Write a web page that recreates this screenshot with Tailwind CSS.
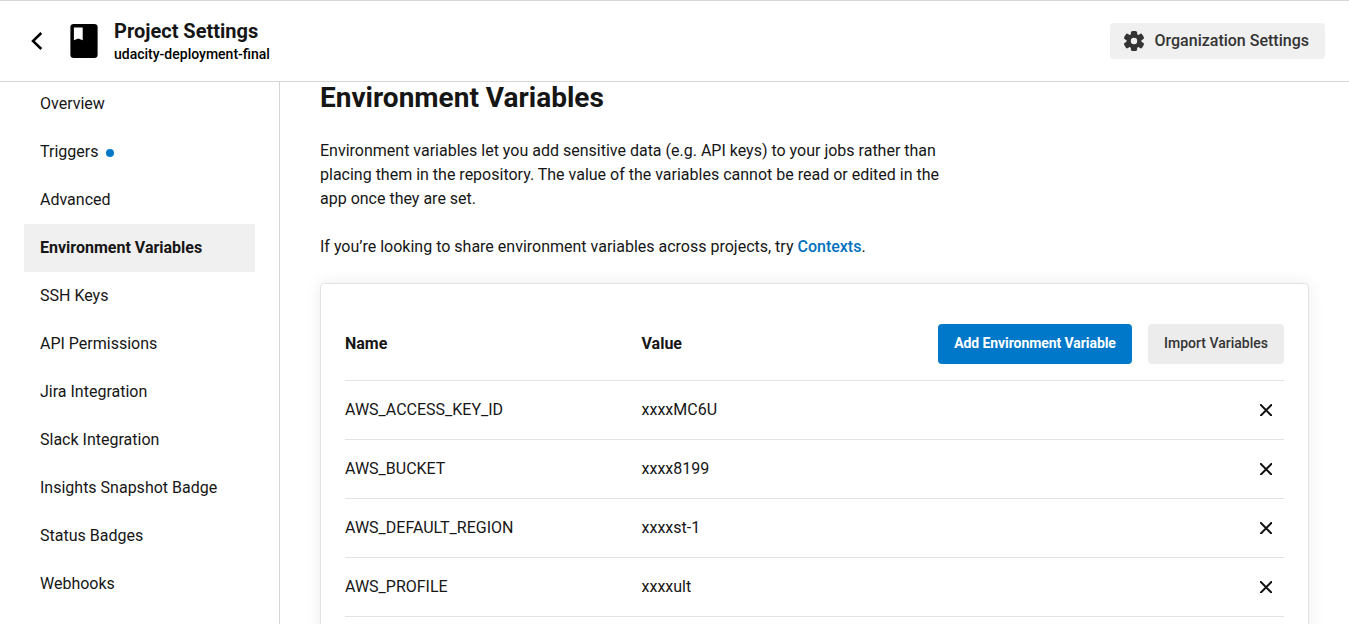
<!DOCTYPE html>
<html lang="en">
<head>
<meta charset="utf-8">
<title>Project Settings</title>
<script src="https://cdn.jsdelivr.net/npm/@tailwindcss/browser@4"></script>
</head>
<body class="flex h-screen flex-col overflow-hidden bg-white font-['Roboto',sans-serif] text-base text-[#161616]">
<header class="flex h-[82px] shrink-0 items-center border-y border-[#d6d6d6] pr-6 pl-[30px]">
  <svg class="h-[34px] w-[14px] shrink-0" viewBox="0 0 14 34" fill="none" stroke="#000" stroke-width="2.5"><path d="M11.3 9 3 17l8.300 8"/></svg>
  <svg class="ml-[26px] h-[34px] w-7 shrink-0" viewBox="0 0 28 34"><rect x=".4" width="27.200" height="34" rx="3.300" fill="#000"/><path d="M3.900 3.600h8.800v12.700l-4.400-1.900-4.400 1.900z" fill="#fff"/></svg>
  <div class="ml-4 flex flex-col pt-0.5">
    <h1 class="text-xl leading-6 font-bold">Project Settings</h1>
    <p class="text-sm leading-[22px] font-medium text-black">udacity-deployment-final</p>
  </div>
  <button class="ml-auto flex h-9 w-[215px] items-center rounded bg-[#f0f0f0] pl-3 text-[#343434]">
    <svg class="size-6" viewBox="0 0 24 24"><g fill="#343434"><rect x="8.900" y="2" width="6.200" height="20" rx="1.600"/><rect x="8.900" y="1.600" width="6.200" height="20.800" rx="1.600" transform="rotate(60 12 12)"/><rect x="8.900" y="1.600" width="6.200" height="20.800" rx="1.600" transform="rotate(120 12 12)"/><circle cx="12" cy="12" r="7.500"/></g><circle cx="12" cy="12" r="3.200" fill="#f0f0f0"/></svg>
    <span class="ml-[8.500px] font-medium whitespace-nowrap">Organization Settings</span>
  </button>
</header>
<div class="flex min-h-0 flex-1 overflow-hidden">
  <nav class="w-[280px] shrink-0 border-r border-[#d6d6d6] pr-6 pl-6">
    <ul class="-mt-0.5 leading-[48px]">
      <li class="h-12 px-4">Overview</li>
      <li class="flex h-12 items-center px-4"><span class="h-12">Triggers</span><span class="mt-0.5 ml-2 size-2 rounded-full bg-[#0078ca]"></span></li>
      <li class="h-12 px-4">Advanced</li>
      <li class="h-12 bg-[#f0f0f0] px-4 font-bold">Environment Variables</li>
      <li class="h-12 px-4">SSH Keys</li>
      <li class="h-12 px-4">API Permissions</li>
      <li class="h-12 px-4">Jira Integration</li>
      <li class="h-12 px-4">Slack Integration</li>
      <li class="h-12 px-4">Insights Snapshot Badge</li>
      <li class="h-12 px-4">Status Badges</li>
      <li class="h-12 px-4">Webhooks</li>
    </ul>
  </nav>
  <main class="min-w-0 flex-1 pr-10 pl-10">
    <h2 class="text-[28px] leading-8 font-bold">Environment Variables</h2>
    <p class="mt-[25px] w-[640px] leading-6">Environment variables let you add sensitive data (e.g. API keys) to your jobs rather than<br>placing them in the repository. The value of the variables cannot be read or edited in the<br>app once they are set.</p>
    <p class="mt-6 leading-6">If you’re looking to share environment variables across projects, try <a class="font-medium text-[#0071bd]">Contexts</a>.</p>
    <section class="mt-6 h-[400px] rounded border border-[#e3e3e3] px-6 pt-10 shadow-[0_0_16px_rgba(0,0,0,0.08)]">
      <div class="flex h-[57px] items-start border-b border-[#e3e3e3]">
        <div class="w-[296.500px] leading-10 font-bold">Name</div>
        <div class="flex-1 leading-10 font-bold">Value</div>
        <button class="h-10 w-[194px] rounded bg-[#0078ca] pb-0.5 text-sm font-bold tracking-[-0.005em] whitespace-nowrap text-white">Add Environment Variable</button>
        <button class="ml-4 h-10 w-[136px] rounded bg-[#ececec] pb-0.5 text-sm font-medium whitespace-nowrap text-[#343434]">Import Variables</button>
      </div>
      <div class="flex h-[59px] items-center border-b border-[#e3e3e3]"><span class="w-[296.500px]">AWS_ACCESS_KEY_ID</span><span class="flex-1">xxxxMC6U</span><svg class="mr-3 size-3" viewBox="0 0 12 12" stroke="#111" stroke-width="2" stroke-linecap="round"><path d="m.6.8 11 11m0-11-11 11"/></svg></div>
      <div class="flex h-[59px] items-center border-b border-[#e3e3e3]"><span class="w-[296.500px]">AWS_BUCKET</span><span class="flex-1">xxxx8199</span><svg class="mr-3 size-3" viewBox="0 0 12 12" stroke="#111" stroke-width="2" stroke-linecap="round"><path d="m.6.8 11 11m0-11-11 11"/></svg></div>
      <div class="flex h-[59px] items-center border-b border-[#e3e3e3]"><span class="w-[296.500px]">AWS_DEFAULT_REGION</span><span class="flex-1">xxxxst-1</span><svg class="mr-3 size-3" viewBox="0 0 12 12" stroke="#111" stroke-width="2" stroke-linecap="round"><path d="m.6.8 11 11m0-11-11 11"/></svg></div>
      <div class="flex h-[59px] items-center border-b border-[#e3e3e3]"><span class="w-[296.500px]">AWS_PROFILE</span><span class="flex-1">xxxxult</span><svg class="mr-3 size-3" viewBox="0 0 12 12" stroke="#111" stroke-width="2" stroke-linecap="round"><path d="m.6.8 11 11m0-11-11 11"/></svg></div>
    </section>
  </main>
</div>
</body>
</html>
